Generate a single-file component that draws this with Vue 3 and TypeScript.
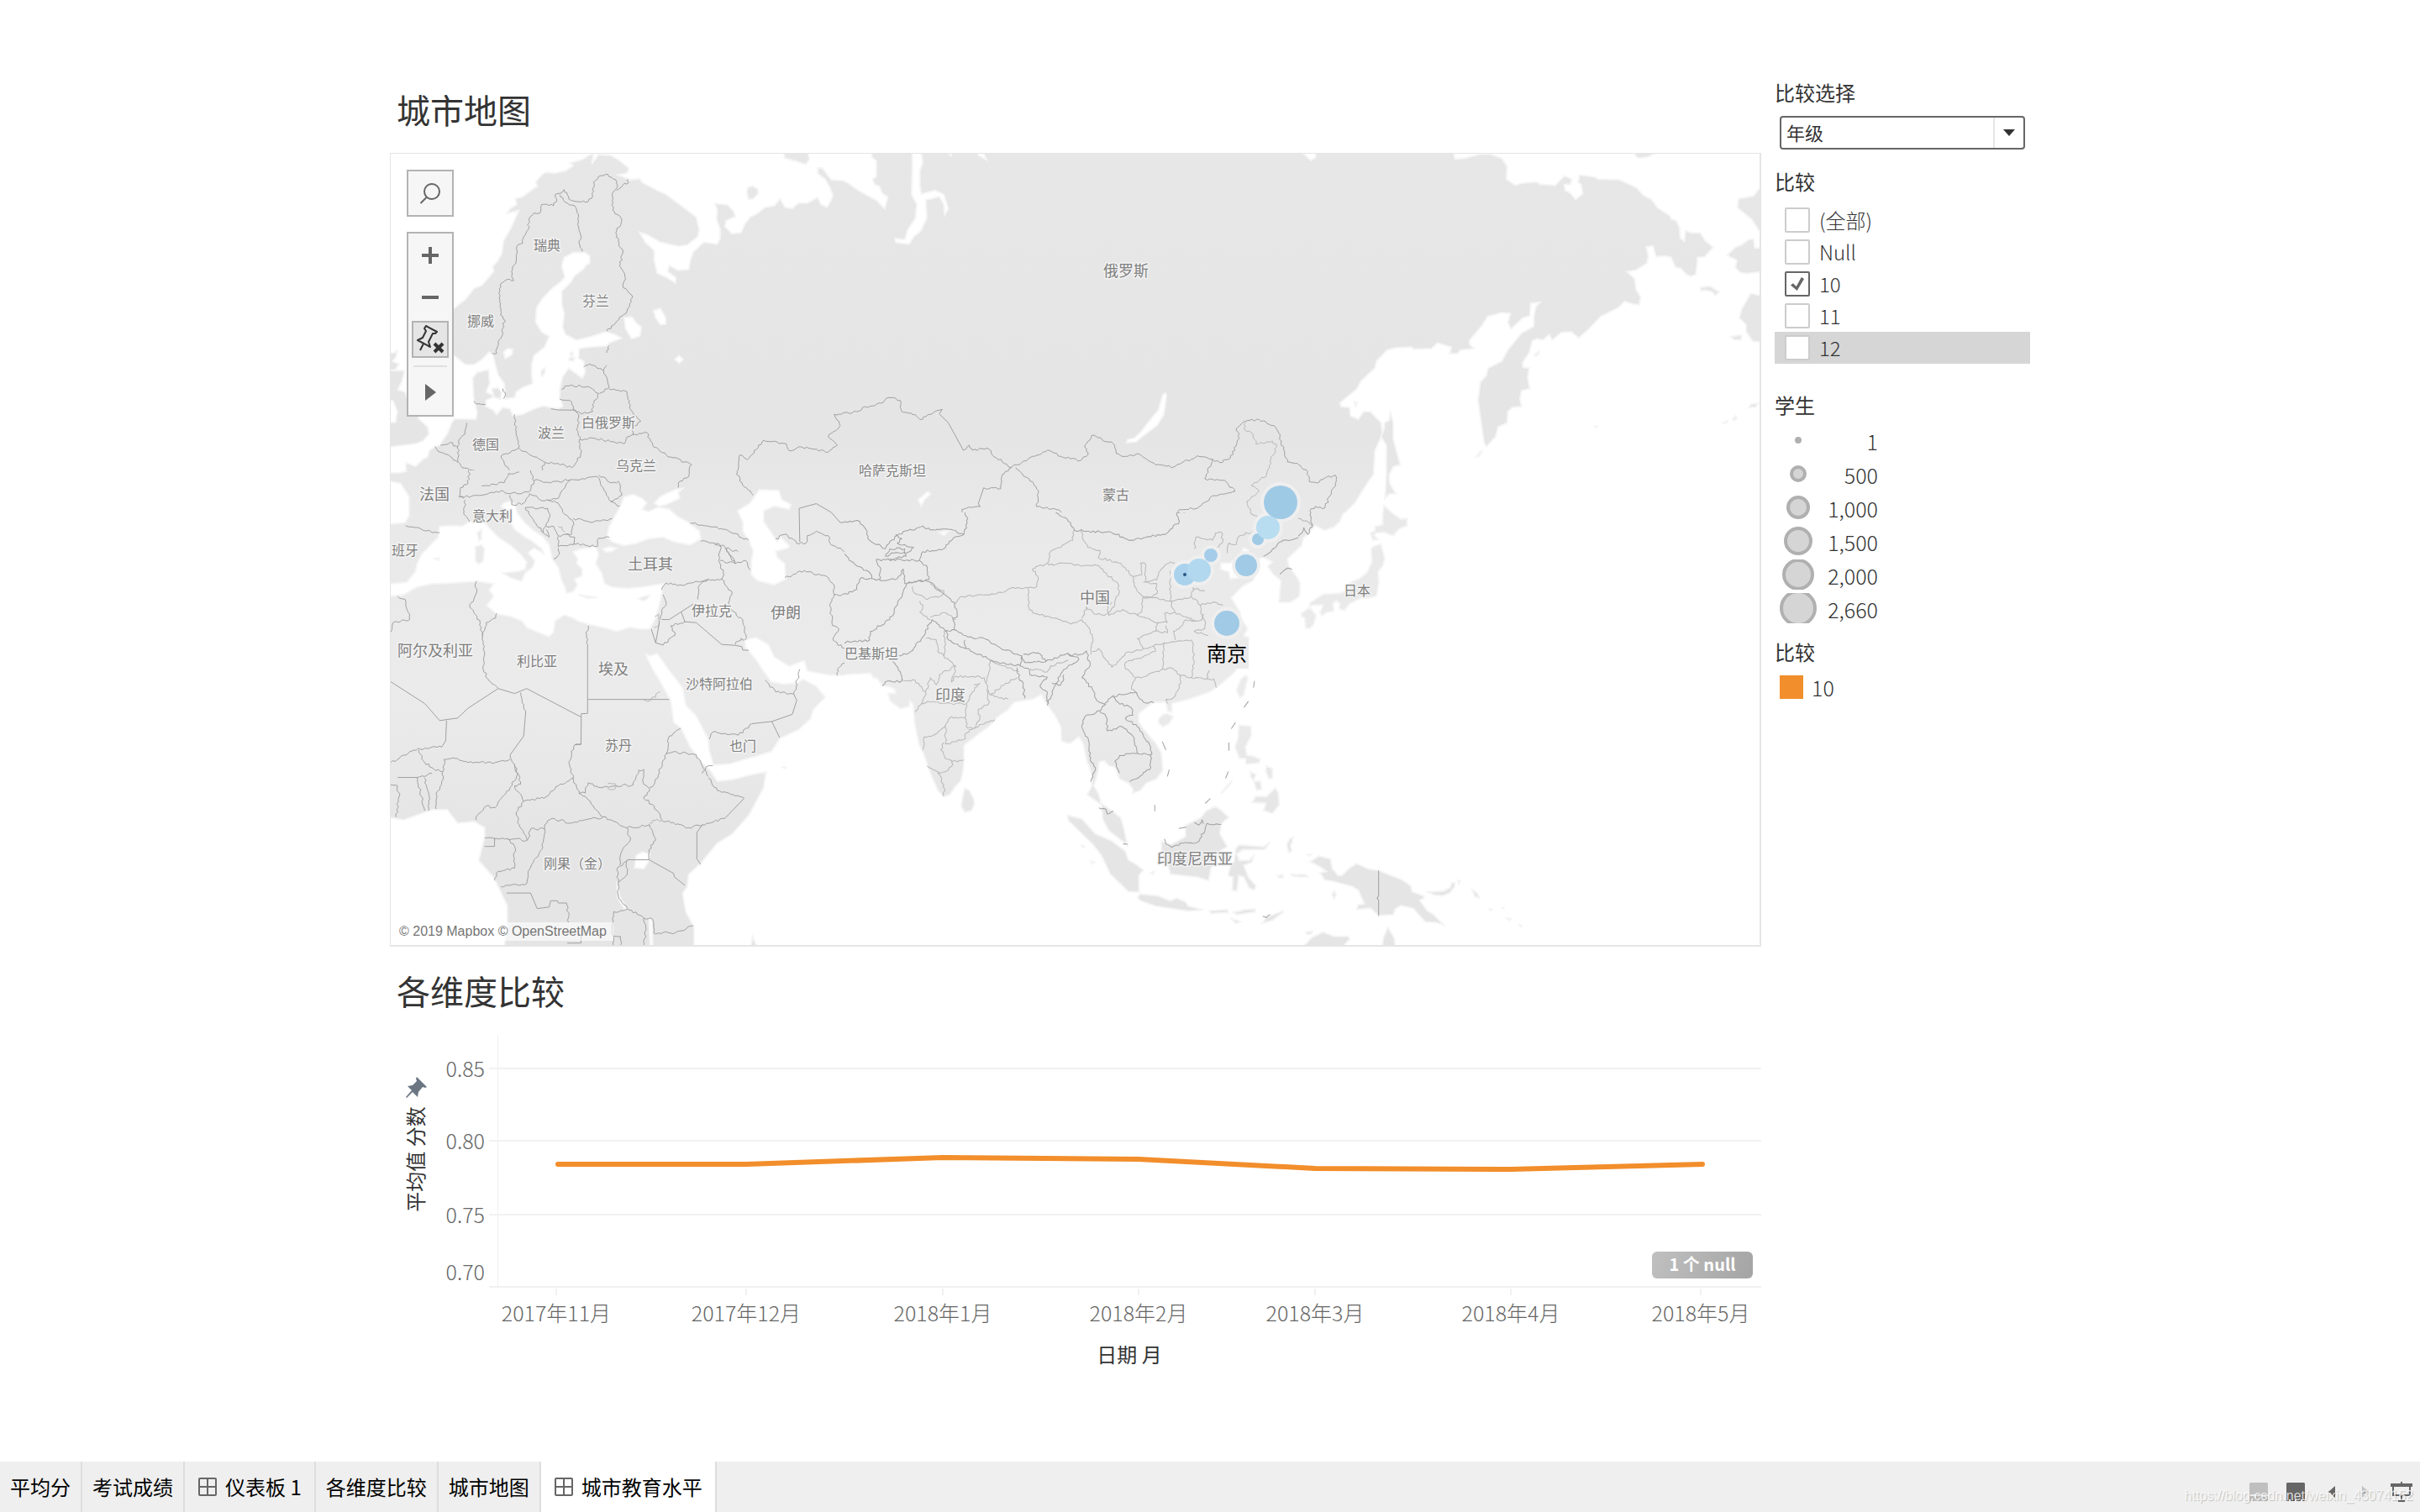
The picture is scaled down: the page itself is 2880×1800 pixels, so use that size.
<script setup lang="ts">
import { ref } from 'vue'

interface TileSource {
  id: string
  ox: number
  oy: number
  sx: number
  sy: number
  x1: number
  y1: number
  x2: number
  y2: number
  land: string[]
  water: string[]
  isles: string[]
  borders: string[]
  straight: string[]
  regions: string[]
}

type Pt = [number, number]

const ALL = '-40,-40 1640,-40 1640,1640 -40,1640'

const sources: TileSource[] = [
  {
    id: 'nw', ox: 450, oy: 80, sx: 2.8, sy: 3, x1: 450, y1: 180, x2: 1005, y2: 560,
    land: [
      '230,880 290,830 320,790 345,780 385,730 382,712 400,690 412,665 418,620 440,580 455,545 468,512 430,522 440,505 462,490 458,470 482,462 510,440 530,425 525,410 545,385 560,375 590,378 625,370 650,352 640,342 680,330 700,316 718,308 712,345 735,312 775,315 800,330 835,360 830,378 800,385 840,402 872,398 880,412 930,440 960,455 1010,495 1060,535 1070,580 1065,605 1030,635 1000,640 940,625 900,600 872,590 890,625 920,655 920,690 930,735 960,750 990,770 992,752 965,730 970,708 1000,725 1035,722 1040,690 1050,660 1085,625 1130,632 1140,610 1140,580 1128,545 1130,510 1122,487 1165,492 1185,515 1190,533 1160,548 1155,568 1180,595 1210,590 1222,560 1240,535 1260,525 1290,500 1320,495 1340,470 1355,500 1380,505 1400,485 1430,485 1465,465 1475,490 1495,500 1510,475 1515,455 1505,430 1490,400 1465,380 1465,360 1480,360 1510,402 1620,412 1620,1500 95,1500 92,1412 125,1425 150,1400 165,1392 170,1370 188,1355 205,1350 230,1310 245,1270 255,1255 325,1258 330,1235 325,1210 318,1180 315,1110 330,1090 368,1080 372,1130 360,1160 388,1175 360,1190 358,1210 385,1225 395,1240 415,1215 440,1220 450,1245 480,1240 520,1220 550,1210 575,1215 600,1220 615,1210 605,1180 605,1150 615,1105 635,1075 655,1090 680,1110 690,1090 685,1050 668,1040 670,1005 700,1000 760,995 770,985 810,968 790,955 760,945 700,965 660,975 625,955 615,930 620,880 612,845 612,800 640,770 655,745 685,720 695,705 705,700 705,675 690,662 650,662 620,680 612,710 622,750 610,765 580,790 545,830 528,860 525,910 545,945 570,962 555,1000 520,1030 512,1060 512,1100 515,1130 480,1145 460,1160 455,1180 425,1185 420,1130 400,1100 390,1060 382,1025 370,1018 345,1045 320,1062 290,1062 265,1040 230,1015',
      '0,1082 88,1084 80,1120 66,1152 90,1160 100,1190 115,1210 140,1220 135,1255 165,1285 170,1310 150,1335 125,1345 0,1362',
      '0,1020 50,1020 64,1012 60,1036 48,1050 70,1060 56,1082 0,1082',
    ],
    water: [
      '0,1180 50,1192 64,1230 58,1268 0,1272',
      '820,895 845,892 862,915 877,928 872,960 845,970 825,935',
      '918,870 940,862 958,895 958,918 940,918 925,895',
      '418,1018 432,1005 448,1008 446,1026 424,1040',
      '990,1044 1002,1030 1016,1044 1003,1057',
    ],
    isles: [
      '1228,445 1232,430 1248,424 1266,436 1266,452 1250,470 1234,472',
      '1350,290 1430,290 1437,330 1425,347 1390,335 1355,325',
      '542,1098 545,1082 556,1075 556,1088 548,1104',
      '378,1150 398,1144 412,1160 408,1185 388,1180',
      '634,1046 640,1036 655,1038 650,1050',
      '640,1020 648,1018 650,1030 642,1030',
    ],
    borders: [
      '380,1022 395,1022 400,980 412,960 415,915 424,905 408,885 406,800 412,770 430,758 452,762 445,730 460,690 462,640 482,628 485,605 500,580 502,545 520,520 540,520 545,490 585,495 595,470 590,455 610,450 620,437 635,470 660,480 700,480 715,460 718,410 735,390 765,382 795,410 795,430 780,460 782,510 812,545 792,592 815,665 805,710 825,755 815,780 848,822 830,870 762,943',
      '795,440 820,415 835,412 832,400',
      '605,455 630,485 655,495 667,525 668,570 675,600 670,630 680,658',
      '770,995 768,1008 762,1020',
      '685,1070 705,1060 725,1068 750,1085 762,1065',
      '752,1085 762,1110 770,1145 738,1165',
      '612,1150 630,1138 700,1140 735,1165 715,1205 715,1230 680,1238 655,1225',
      '770,1150 830,1160 835,1200 850,1235 875,1265 850,1290 850,1312',
      '605,1185 645,1195 650,1222 668,1240 665,1300 672,1330 720,1325 820,1345 830,1320 895,1305 915,1350 960,1385 1045,1420 1030,1450',
      '455,1240 460,1300 468,1360 410,1388 425,1425 455,1450',
      '468,1360 500,1380 555,1410 600,1415 645,1430 675,1385 672,1330',
      '555,1412 540,1450',
      '295,1270 290,1310 270,1330 265,1400 280,1430 320,1440',
      '190,1355 200,1372 240,1390 265,1412',
      '208,1350 240,1340 265,1358',
      '320,1192 328,1203 358,1205',
      '416,1148 425,1168 418,1184',
      '1195,1450 1205,1385 1230,1402 1285,1332 1360,1345 1370,1370 1405,1355 1500,1375 1530,1350 1500,1320 1540,1280 1520,1240 1575,1232',
    ],
    straight: ['576,1220 600,1224 655,1225'],
    regions: [],
  },
  {
    id: 'sw', ox: 450, oy: 560, sx: 2.8, sy: 2.703, x1: 450, y1: 560, x2: 1005, y2: 1126,
    land: [ALL],
    water: [
      '0,-30 95,-30 96,2 70,8 0,6',
      '0,35 42,35 75,42 103,85 103,145 90,168 42,172 0,172',
      '0,366 42,365 95,360 125,325 130,300 145,270 170,245 200,215 205,180 245,178 280,180 305,165 345,165 358,172 380,195 400,215 440,240 475,270 495,295 490,318 465,325 415,330 440,345 478,357 490,330 515,312 522,290 500,265 520,250 552,268 545,252 510,225 490,215 455,190 440,165 430,130 410,115 420,105 435,100 455,110 465,140 490,170 520,195 550,215 570,240 580,285 600,312 612,355 622,375 628,395 650,390 664,370 655,350 680,338 680,318 662,300 665,285 650,262 668,255 700,250 725,245 735,270 725,300 745,330 755,365 780,375 830,380 880,375 950,365 945,400 935,440 925,475 905,510 870,510 840,505 795,518 760,508 700,495 665,485 650,475 620,465 590,485 585,520 570,535 530,520 495,505 480,485 440,470 395,462 362,435 385,405 370,385 385,365 330,357 250,362 180,365 130,375 85,400 42,405 0,405',
      '820,85 850,78 880,90 895,105 880,125 900,133 935,118 970,125 1000,150 1030,165 1070,195 1075,220 1040,240 985,230 950,215 900,220 860,235 820,242 780,230 762,215 770,180 785,155 805,120',
      '920,105 940,85 960,75 990,62 1015,58 1000,72 1005,90 960,110 935,115',
      '750,252 770,246 794,250 780,260 758,262',
      '1198,130 1240,105 1270,62 1335,65 1345,95 1375,110 1370,125 1320,115 1285,130 1285,165 1320,215 1330,230 1340,215 1370,242 1365,250 1325,260 1330,280 1355,300 1358,350 1320,368 1265,355 1243,335 1245,285 1250,260 1235,225 1215,195 1215,165',
      '893,592 905,597 930,590 975,650 1015,700 1025,755 1060,790 1100,865 1103,900 1117,948 1170,945 1240,925 1310,905 1340,862 1400,835 1440,800 1450,770 1490,730 1460,695 1415,672 1398,684 1350,688 1310,680 1280,640 1260,610 1225,570 1222,545 1260,538 1300,560 1320,600 1370,630 1420,612 1430,645 1500,658 1640,662 1640,1640 1053,1640 1053,1470 1025,1420 1015,1360 1030,1340 1035,1300 1075,1265 1130,1200 1180,1170 1235,1110 1285,1020 1293,970 1240,980 1180,995 1130,1000 1110,970 1080,940 1040,890 1010,830 985,810 975,740 940,680 915,640 900,610',
      '0,1110 85,1125 180,1092 230,1092 265,1135 320,1130 355,1150 355,1180 335,1255 385,1310 410,1360 430,1400 430,1470 415,1560 0,1560',
      '860,1240 880,1228 905,1235 900,1260 885,1282 855,1278',
      '796,1322 804,1370 828,1410 822,1412 798,1375',
      '903,1445 912,1448 916,1560 908,1560',
    ],
    isles: [
      '324,245 345,240 354,252 350,292 335,302 324,290',
      '330,200 344,190 344,222 336,228',
      '668,400 700,404 730,408 700,412',
      '868,412 890,404 906,402 896,414 880,420',
      '188,284 204,282 200,290',
      '1236,1560 1248,1500 1275,1560',
      '1348,955 1362,955 1354,959',
    ],
    borders: [
      '305,-10 300,42 275,55 270,85 285,90',
      '270,85 345,80 410,65 440,75 500,70 520,35 505,-10',
      '345,50 420,40 435,10 470,5',
      '290,95 285,140 305,165',
      '440,80 445,110 485,105 505,75 555,98 600,90 640,30 575,40 520,32',
      '640,30 655,30 730,20 775,100 805,115',
      '735,15 780,40 800,35 812,80 775,100',
      '490,120 565,122 572,150 550,200 520,165 490,120',
      '565,95 600,105 620,140 650,165 645,205 600,210 585,180 560,180',
      '650,155 720,165 780,155',
      '600,212 600,245 650,240 655,215 625,205',
      '650,235 730,245 735,218 770,215',
      '600,250 605,268 585,285',
      '550,200 570,215 560,190',
      '1000,55 1005,35 1035,20 1040,-10',
      '1190,-10 1205,35 1250,80',
      '92,178 160,195 205,200',
      '945,385 960,362 1020,370 1100,350 1145,350 1150,330 1135,290 1140,240 1120,235 1075,228',
      '1040,170 1160,190 1235,225',
      '1122,240 1150,240 1190,300 1225,290 1240,320',
      '1140,290 1190,300 1160,250 1200,262',
      '1065,415 1070,370 1100,350',
      '1145,350 1180,395 1165,440 1215,480 1225,545',
      '950,400 960,425 945,450 940,480',
      '950,562 990,530 975,500 1022,487',
      '1190,560 1210,540 1222,545',
      '1355,345 1420,322 1500,345 1520,370 1520,400 1580,400',
      '1520,400 1505,435 1515,500 1535,510 1515,545 1560,580 1555,620 1530,640 1530,660',
      '1325,220 1360,205 1395,235 1425,235 1430,210 1460,195 1500,210 1510,240 1540,250 1580,290',
      '1290,675 1325,713 1385,720 1405,640',
      '1245,815 1200,852 1115,842 1103,865',
      '65,405 90,415 105,480 50,490 42,520',
      '328,357 325,400 305,440 340,490 348,535 360,490 392,475 395,460',
      '348,535 355,590 350,640 365,670 400,700',
      '700,500 695,530 698,560',
      '675,880 655,883 635,940 650,990',
      '475,715 480,740 492,775',
      '440,915 465,975 475,1010',
      '212,890 140,897 120,900 42,940',
      '135,900 155,940 185,960',
      '42,1012 65,1015 70,1050 60,1115',
      '130,988 145,1050 155,1095',
      '130,988 180,975',
      '155,990 170,1050 168,1095',
      '185,960 215,970 212,1010 193,1040 193,1090',
      '215,970 220,930 250,925 300,940 390,940 440,930',
      '455,945 465,975 440,1020 390,1085 360,1080 330,1110 328,1125',
      '475,1010 455,1015 485,1065 460,1100 470,1140 497,1190',
      '485,1065 560,1050 600,1015 650,990 670,1040 700,1060 750,1115 640,1135 580,1120 555,1140 555,1155 510,1152 497,1190 430,1185 355,1182',
      '670,1040 690,1038 700,1005 735,1020 850,1012 868,965 885,962 885,1010 905,1025 885,1055 920,1080 945,1125 1035,1150 1080,1140 1155,1120',
      '1220,1055 1130,1030 1100,990',
      '1100,985 1060,915 985,905 960,912 920,1010 905,1020',
      '960,912 970,855 1008,830',
      '1080,975 1092,955 1115,950',
      '750,1115 830,1150 905,1140 925,1190 903,1220 903,1253',
      '830,1150 840,1190 810,1230 805,1270',
      '555,1155 545,1220 500,1290 495,1330 410,1340',
      '430,1185 455,1210 455,1280 400,1290 388,1320',
      '635,1455 630,1400 628,1392',
      '795,1285 830,1255 830,1300 800,1325 795,1285',
      '800,1325 800,1370 830,1410 885,1440 892,1470 885,1530',
      '885,1440 915,1445 918,1488 990,1488 1050,1465',
      '830,1412 785,1420 780,1480 785,1530',
      '785,1500 808,1500 806,1530',
    ],
    straight: [
      '42,680 155,750 205,805 265,797 300,765 400,702 455,718 495,702 675,793',
      '698,560 698,782 677,783 676,882 655,883',
      '700,737 970,737',
      '492,775 485,855 440,915',
      '228,805 225,870 212,890',
      '65,988 130,988',
      '945,480 970,480 1050,430',
      '1010,455 1022,487',
      '910,510 925,555 950,562',
      '925,555 938,485',
      '1022,487 1060,490 1145,560 1190,563 1212,567 1215,578 1235,579',
      '1405,230 1403,122 1460,107 1510,135 1540,168 1580,165',
      '1385,720 1395,740 1380,785 1312,808 1245,815',
      '1312,808 1338,860',
      '1155,1120 1220,1055',
      '830,1253 903,1253 985,1297 987,1308 1022,1335',
      '1075,1268 1062,1250 1062,1165 1080,1142',
      '428,1360 508,1360 530,1410 570,1405 575,1385 598,1385 600,1392 628,1392',
      '355,1210 388,1210 388,1182',
      '630,1521 676,1521 676,1490',
    ],
    regions: ['885,740 905,742 940,712', '765,1008 790,1008 790,1024 765,1024', '905,1135 930,1122 945,1128', '600,180 612,182 622,198', '922,470 935,462 935,500 920,505'],
  },
  {
    id: 'n', ox: 1000, oy: 160, sx: 2.8, sy: 3, x1: 1005, y1: 180, x2: 1545, y2: 610,
    land: [ALL],
    water: [
      '-40,30 105,30 105,80 120,95 120,150 108,160 115,180 130,185 140,210 158,225 148,265 120,235 60,200 20,170 -40,165',
      '240,30 262,30 272,80 275,100 265,130 265,180 270,213 315,200 345,215 360,265 348,287 345,250 330,222 285,235 288,300 268,345 245,365 230,392 185,386 183,372 215,376 225,340 250,300 255,250 238,215 240,130',
      '1075,930 1082,924 1087,932 1078,1000 1055,1040 1005,1080 985,1098 955,1100 958,1090 980,1085 1000,1065 1040,1010 1060,985',
      '1540,30 1640,30 1640,120 1568,92 1545,68',
      '260,1305 292,1276 300,1284 280,1305 270,1327',
      '460,40 478,68 487,90 460,75',
      '355,60 372,60 368,76',
    ],
    isles: [],
    borders: [
      '0,1000 70,985 75,975 135,960 160,940 200,950 205,990 235,995 265,1018 300,1000 330,985',
      '410,1128 430,1110 440,1128 490,1120 520,1155 555,1178 570,1190 590,1180 640,1150 690,1128 735,1150 800,1165 825,1145 815,1110 838,1075 910,1105 920,1140 950,1150 990,1140 1050,1180 1110,1188 1190,1148 1240,1160 1265,1172 1300,1155 1330,1085 1320,1050 1350,1025 1395,1018 1445,1040 1465,1080 1490,1170 1530,1180 1560,1210 1568,1245',
      '1240,1160 1215,1230 1280,1235 1315,1275 1245,1290 1190,1335 1130,1340 1122,1385',
      '570,1190 540,1215 535,1265 478,1262',
      '460,1328 405,1340 412,1380',
      '585,1190 610,1220 640,1240 660,1280 655,1330 720,1340 760,1365',
    ],
    straight: ['330,985 340,982 330,998 360,1030 410,1128', '478,1262 460,1318 466,1330 460,1328'],
    regions: ['1350,1030 1345,1050 1375,1070 1385,1105 1440,1095 1455,1115 1435,1160 1420,1220 1370,1255 1395,1275 1355,1310 1370,1360'],
  },
  {
    id: 'ne', ox: 1540, oy: 160, sx: 2.751, sy: 3, x1: 1545, y1: 180, x2: 2096, y2: 610,
    land: [
      '-20,30 20,30 30,68 55,93 70,82 74,30 515,30 527,88 560,85 605,72 640,70 680,85 698,115 695,160 725,182 750,173 795,170 805,178 855,182 885,148 910,160 905,178 885,180 888,200 905,210 922,232 945,212 940,180 930,170 935,145 985,152 995,160 1065,162 1120,190 1145,218 1170,232 1190,262 1230,290 1235,302 1250,308 1262,330 1264,370 1278,382 1282,343 1300,352 1330,352 1345,378 1372,403 1345,437 1320,440 1320,465 1315,500 1300,507 1285,500 1265,478 1248,474 1235,440 1215,434 1185,437 1175,398 1153,402 1160,435 1155,460 1120,485 1090,490 1115,515 1120,555 1135,580 1130,608 1108,606 1083,597 1060,620 1005,650 965,695 932,727 908,705 875,707 845,735 835,715 815,735 795,730 780,738 770,780 748,815 750,832 770,835 765,870 772,908 745,915 740,945 745,972 715,975 700,990 698,1030 668,1045 660,1080 630,1115 622,1100 602,950 610,885 630,860 635,835 680,810 700,770 745,710 785,685 785,650 792,615 805,600 775,603 772,648 750,655 710,695 700,672 708,640 680,637 635,650 610,690 575,735 575,750 590,765 545,770 535,783 510,783 515,760 470,745 450,765 390,767 385,760 335,762 305,770 270,810 265,835 220,880 205,910 150,960 155,972 182,975 185,1005 210,1017 228,990 250,990 285,1030 290,1070 265,1130 260,1215 240,1245 200,1315 160,1360 150,1385 120,1410 100,1413 70,1400 30,1440 -20,1440',
    ],
    water: [],
    isles: [
      '315,988 325,1030 325,1090 348,1180 325,1187 312,1215 313,1245 333,1283 312,1285 298,1300 302,1215 302,1110 285,1080 295,1050 296,1030 312,1020',
      '1600,190 1521,196 1505,220 1455,230 1452,262 1500,305 1521,342 1600,350',
      '1600,405 1508,405 1505,375 1490,375 1465,395 1445,403 1418,432 1450,450 1445,475 1460,493 1480,497 1521,492 1600,492',
      '1600,572 1521,574 1495,568 1465,625 1458,655 1480,680 1480,705 1503,740 1600,742',
      '1330,547 1362,542 1392,563 1380,575 1368,562 1350,557 1332,557',
      '1430,722 1465,716 1463,735 1440,733',
      '1118,60 1195,60 1160,80 1130,85 1118,78',
      '597,1152 608,1134 615,1132 608,1148',
      '788,786 802,774 802,784 790,792',
      '198,955 208,958 202,970',
      '1489,976 1495,964 1520,960 1512,974', '1437,1016 1446,1005 1450,1016 1440,1022', '1402,1032 1418,1024 1416,1030',
      '985,1043 992,1043 988,1047',
      '295,1325 320,1350 320,1360 290,1360',
    ],
    borders: ['-5,1170 20,1182 45,1205 50,1240 75,1245 100,1228 135,1217 138,1240 118,1290 100,1335 70,1328 52,1345 56,1365'],
    straight: [],
    regions: [],
  },
  {
    id: 's', ox: 1000, oy: 600, sx: 2.8, sy: 2.904, x1: 1005, y1: 610, x2: 1545, y2: 1126,
    land: [
      '-30,-30 1640,-30 1640,60 1568,92 1535,120 1530,150 1490,190 1495,215 1520,250 1532,275 1530,320 1500,340 1462,340 1468,265 1440,240 1425,215 1440,200 1410,185 1390,190 1370,200 1360,240 1330,200 1360,160 1345,152 1335,170 1300,205 1268,205 1268,225 1295,235 1300,258 1330,255 1365,242 1385,245 1375,265 1340,285 1303,325 1330,370 1335,395 1358,430 1345,455 1362,462 1345,520 1330,560 1310,585 1260,630 1230,650 1160,675 1105,690 1105,720 1090,715 1085,685 1040,687 995,725 995,755 1020,790 1050,825 1070,860 1075,920 1055,950 1020,965 1000,990 975,1000 975,985 960,965 930,950 915,910 895,905 880,888 862,892 860,920 845,975 860,1000 870,1035 905,1060 935,1085 945,1120 957,1180 945,1170 895,1130 875,1090 870,1040 823,1005 838,975 840,940 822,890 810,830 795,805 765,828 737,820 735,770 715,730 690,695 670,660 640,675 580,685 555,715 535,728 515,745 500,765 455,800 412,835 412,895 408,930 400,960 385,975 365,1005 345,1012 325,990 300,930 280,870 262,830 248,760 242,690 232,680 230,700 200,708 165,680 160,655 185,655 180,640 165,632 140,628 125,605 110,600 100,585 -30,592',
    ],
    water: ['330,98 362,92 345,108'],
    isles: [
      '1540,375 1640,350 1640,430 1552,430 1550,395',
      '1335,605 1350,592 1358,600 1345,660 1332,670 1320,645',
      '1060,745 1075,728 1090,725 1110,735 1095,760 1075,770 1062,760',
      '415,982 430,990 445,1020 447,1040 437,1060 415,1066 403,1045 408,1010',
      '1328,765 1368,768 1370,800 1350,840 1355,868 1375,872 1400,882 1395,895 1352,900 1350,880 1330,880 1315,840 1325,810',
      '1366,925 1385,935 1378,955 1368,945',
      '1420,905 1440,915 1440,948 1428,950 1418,925',
      '1378,960 1400,958 1404,985 1388,990',
      '1450,982 1460,1000 1463,1040 1440,1070 1410,1060 1418,1035 1372,1032 1385,1010 1420,1012',
      '1268,1000 1290,972 1306,955 1300,968 1275,996',
      '757,1076 805,1088 850,1140 905,1165 950,1200 960,1230 985,1245 1010,1265 995,1285 996,1342 960,1340 900,1280 870,1215 840,1175 790,1125 760,1095',
      '1000,1348 1060,1355 1100,1372 1120,1362 1150,1375 1160,1390 1210,1403 1160,1408 1050,1390 1000,1372 990,1360',
      '1230,1406 1290,1402 1292,1412 1235,1416',
      '1310,1412 1350,1402 1382,1400 1384,1410 1322,1420',
      '1405,1450 1420,1430 1475,1406 1475,1412 1440,1440',
      '1300,1432 1318,1438 1334,1444 1318,1450',
      '1070,1165 1100,1178 1150,1150 1150,1110 1200,1085 1220,1060 1250,1045 1265,1055 1295,1083 1270,1105 1265,1140 1290,1185 1265,1200 1250,1240 1235,1260 1228,1302 1190,1290 1100,1280 1090,1240 1070,1200',
      '1318,1190 1330,1178 1410,1185 1432,1170 1415,1194 1340,1196 1322,1210 1330,1232 1362,1232 1378,1215 1372,1238 1345,1250 1360,1290 1385,1320 1380,1335 1362,1328 1345,1290 1328,1285 1322,1338 1306,1335 1308,1290 1292,1285 1300,1250 1312,1235',
      '1488,1180 1495,1160 1508,1152 1506,1170 1500,1180 1505,1200 1494,1205',
      '1458,1284 1475,1282 1476,1292 1462,1292', '1502,1280 1550,1282 1560,1288 1510,1288', '1034,1275 1046,1270 1042,1281', '835,1235 846,1238 838,1244', '804,1180 814,1184 808,1188',
      '1548,1540 1550,1520 1570,1480 1640,1470 1640,1540',
    ],
    borders: [
      '0,66 65,60 90,95 92,120 150,155 165,130 210,95 240,90 275,76 300,90 370,88 412,105 425,50 405,15 465,0',
      '185,105 205,120 190,135 245,150 220,170 185,168 150,180 165,155 215,155 220,180 165,190',
      '0,155 30,195 100,240 105,258 65,258 55,295 0,318',
      '105,258 135,265 190,258 210,225 215,275 295,262 290,220 262,195 120,192 135,225 130,262',
      '262,195 275,165 345,155 375,120 412,105',
      '0,480 98,470 100,440 165,400 190,350 215,290 222,275 260,265 300,270 330,300 380,340 390,390 375,395 382,435',
      '140,628 150,615 205,612 200,580 175,545',
      '195,525 235,510 275,460 305,400 350,440 382,435 425,460 480,465 550,505 605,525 600,560 520,545 420,500 415,470',
      '420,500 360,470 352,435',
      '610,520 660,515 685,545 615,548 605,525',
      '685,545 750,520 800,520 820,508 832,560 805,600 840,640 855,680 880,692 905,665 985,650 1010,685 1045,687',
      '590,565 595,600 610,620 613,672',
      '600,560 625,568 632,590 690,598 665,630 690,650 690,695 710,640 740,580 795,535 760,520',
      '705,620 735,625 745,590',
      '885,692 865,715 815,735 805,765 830,830 830,870 850,920 835,960',
      '910,660 925,685 970,705 975,730 950,740 990,770 1035,840 1035,910 1000,940 965,960',
      '865,715 885,735 890,785 940,770 980,810 990,862 930,870 915,890 930,930',
      '990,862 1035,865',
      '650,-5 660,12 720,30 760,60 780,90 905,100 970,125 1090,100 1130,60 1122,30 1160,25 1220,0',
      '1410,182 1470,130 1530,115 1545,88',
      '1465,243 1485,225 1505,225',
      '862,1050 885,1055 890,1072 910,1062',
      '1080,1158 1085,1175 1105,1187 1150,1170 1190,1170 1215,1130 1222,1104 1270,1107',
      '1180,1100 1195,1110 1205,1092 1210,1105', '942,1176 958,1177', '1408,1425 1420,1430 1432,1420',
    ],
    straight: [
      '1380,612 1377,635', '1360,682 1345,703', '1317,755 1303,777', '1295,825 1295,853', '1293,925 1284,948', '1233,1018 1216,1035', '1153,1117 1128,1122', '1048,1040 1048,1062', '1096,918 1090,942', '1073,822 1085,850',
    ],
    regions: [
      '780,90 775,125 700,165 690,205 640,225 660,255 655,285 625,290 575,288 545,305 480,315 400,320 380,345',
      '690,205 710,212 745,205 780,212 855,212 925,275 930,300 915,345 905,360 880,385 845,380 820,355 805,395',
      '625,290 630,365 650,378 720,395 770,415 805,400 830,430 840,460 835,520',
      '800,92 825,150 865,160 860,185 935,205 975,250 1005,245 1000,205 1015,205 1020,270 1055,262 1070,225 1100,200 1115,205',
      '975,250 985,290 1010,320 1005,370 990,385 940,365 895,385 890,350 905,340',
      '1010,270 1055,275 1055,310 1040,320 1010,325',
      '840,510 860,500 905,565 920,555 935,535 950,515 1010,500 990,465 1050,440 1060,410 1020,395 990,385',
      '1010,320 1070,330 1100,335 1115,375 1080,378 1090,410 1060,410',
      '1100,230 1100,310 1100,335 1170,320 1175,290 1215,300',
      '1115,375 1190,405 1205,400 1200,350 1170,320',
      '1190,405 1150,400 1130,430 1110,440 1115,470',
      '1200,350 1240,340 1275,350', '1210,380 1215,430 1180,440 1225,455',
      '1010,500 1045,490 1050,510 1030,520 950,548 950,570 985,600 970,640 990,655',
      '985,600 1020,595 1075,570 1080,480 1170,470 1180,520 1170,600 1130,590 1110,570 1075,570',
      '1045,490 1080,480', '1050,440 1090,445 1085,420',
      '1130,590 1135,620 1110,670 1085,675 1090,690',
      '1170,600 1220,605 1245,605 1253,635', '1220,605 1230,575',
      '1180,155 1185,115 1240,125 1250,100 1270,98 1275,130 1255,150', '1290,170 1295,135 1320,140 1330,110 1375,95', '1365,0 1370,35 1390,42', '1510,15 1530,25 1560,20',
      '205,608 250,610 285,650 275,680 260,700 250,720',
      '285,650 300,600 320,625 330,590 385,560 370,615 385,595 480,600 490,640 500,660 560,675',
      '270,690 300,685 370,690 420,690 415,740 370,735 350,765 310,800 280,805 275,850',
      '350,765 350,830 410,815 430,780 480,760 515,745',
      '345,825 335,850 350,880 375,890 412,885', '290,905 330,930 360,920 375,900 370,890',
      '325,930 345,970 345,1010',
      '420,690 440,650 465,620 445,625', '415,740 425,775 450,775 465,740 460,710 495,690 490,640',
      '285,465 320,470 325,510 345,525 350,480 345,440', '345,525 385,560', '485,620 495,580 500,540 550,560 595,580',
      '500,660 550,620 590,600', '632,570 690,580 700,560 760,540',
      '240,285 250,310 290,330 340,315 345,300 300,275', '265,335 275,350 265,375 300,400', '300,390 345,375 385,400',
    ],
  },
  {
    id: 'se', ox: 1540, oy: 600, sx: 2.751, sy: 2.904, x1: 1545, y1: 610, x2: 2096, y2: 1126,
    land: ['-30,-30 220,-30 195,0 160,35 150,60 130,80 100,92 70,75 30,120 25,145 -30,185'],
    water: [],
    isles: [
      '290,0 300,8 320,30 350,52 370,50 370,75 345,85 325,110 295,98 268,100 262,108 275,122 258,125 250,100 265,92 265,78 290,72',
      '262,145 285,138 290,160 297,190 290,215 275,235 278,270 270,318 245,325 220,325 182,345 165,368 148,362 150,345 138,335 128,345 130,370 105,375 92,387 85,375 95,350 60,350 50,355 52,342 95,312 150,308 180,300 185,270 215,258 240,235 255,200 252,155',
      '24,378 52,357 72,385 65,415 52,430 38,428 35,395 25,388',
      '-30,180 2,225 20,275 18,318 -30,335',
      '52,1238 80,1217 120,1227 125,1260 145,1285 158,1283 180,1260 205,1243 245,1262 277,1267 355,1300 382,1320 387,1340 425,1355 425,1362 412,1370 435,1405 458,1420 490,1455 465,1447 430,1445 390,1398 350,1388 332,1400 325,1420 277,1423 250,1398 205,1402 210,1385 230,1382 210,1335 190,1322 130,1305 100,1300 85,1275 105,1270 90,1258 65,1243',
      '440,1342 490,1338 512,1325 515,1310 527,1310 525,1325 510,1345 485,1355 460,1352',
      '583,1332 600,1345 607,1362 592,1358', '124,1350 132,1338 138,1352 130,1365', '640,1400 648,1402 644,1406', '680,1396 690,1400', '697,1432 711,1434 705,1440', '536,1302 545,1304 540,1314', '738,1452 745,1460 740,1460',
      '-30,1276 40,1282 46,1290 -30,1287',
      '20,1560 35,1524 60,1497 95,1480 130,1494 178,1495 182,1505 160,1530 150,1560',
      '38,1480 60,1476 58,1486 42,1488',
      '285,1560 292,1500 307,1463 328,1500 335,1560',
      '45,1212 55,1212 50,1217',
    ],
    borders: ['105,-10 100,15 70,8 52,22 60,70 45,105 32,82 20,105 -10,118'],
    straight: ['277,1267 277,1355 272,1363 277,1370 277,1424'],
    regions: ['-5,65 20,50 40,58 60,75'],
  },
]

/** Repeatable noise in -1..1 so outlines keep the same shape on each render. */
function noise(a: number, b: number): number {
  const v = Math.sin(a * 12.9898 + b * 78.233) * 43758.5453
  return (v - Math.floor(v)) * 2 - 1
}

function parse(text: string): Pt[] {
  return text.split(' ').map((p) => p.split(',').map(Number) as Pt)
}

function trace(text: string, amp: number, step: number, closed: boolean): string {
  const pts = parse(text)
  if (closed) pts.push(pts[0])
  const out: string[] = [`M${pts[0][0]} ${pts[0][1]}`]
  for (let i = 1; i < pts.length; i++) {
    const [ax, ay] = pts[i - 1]
    const [bx, by] = pts[i]
    const len = Math.hypot(bx - ax, by - ay)
    const n = amp > 0 ? Math.max(1, Math.round(len / step)) : 1
    for (let k = 1; k <= n; k++) {
      const t = k / n
      const off = k < n ? noise(ax + k * 3.1, by + k * 1.7) * amp : 0
      const x = ax + (bx - ax) * t - ((by - ay) / (len || 1)) * off
      const y = ay + (by - ay) * t + ((bx - ax) / (len || 1)) * off
      out.push(`L${x.toFixed(1)} ${y.toFixed(1)}`)
    }
  }
  return out.join('') + (closed ? 'Z' : '')
}

const tiles = sources.map((s) => ({
  id: s.id,
  x: s.x1,
  y: s.y1,
  w: s.x2 - s.x1,
  h: s.y2 - s.y1,
  box: [(s.x1 - s.ox) * s.sx, (s.y1 - s.oy) * s.sy, (s.x2 - s.x1) * s.sx, (s.y2 - s.y1) * s.sy].join(' '),
  g1: (182 - s.oy) * s.sy,
  g2: (1126 - s.oy) * s.sy,
  land: s.land.map((p) => trace(p, 0, 20, true)).join(''),
  water: s.water.map((p) => trace(p, 0, 20, true)).join(''),
  isles: s.isles.map((p) => trace(p, 0, 20, true)).join(''),
  borders: s.borders.map((p) => trace(p, 4, 8, false)).join('') + s.straight.map((p) => trace(p, 0, 9, false)).join(''),
  regions: s.regions.map((p) => trace(p, 4, 8, false)).join(''),
}))

const places: { name: string; x: number; y: number; big?: boolean }[] = [
  { name: '瑞典', x: 651, y: 292 },
  { name: '芬兰', x: 709, y: 358 },
  { name: '挪威', x: 572, y: 382 },
  { name: '德国', x: 578, y: 529 },
  { name: '波兰', x: 656, y: 515 },
  { name: '白俄罗斯', x: 724, y: 503 },
  { name: '乌克兰', x: 757, y: 554 },
  { name: '法国', x: 517, y: 588, big: true },
  { name: '意大利', x: 586, y: 614 },
  { name: '班牙', x: 482, y: 655 },
  { name: '土耳其', x: 774, y: 671, big: true },
  { name: '伊拉克', x: 847, y: 727 },
  { name: '伊朗', x: 935, y: 729, big: true },
  { name: '阿尔及利亚', x: 518, y: 774, big: true },
  { name: '利比亚', x: 639, y: 787 },
  { name: '埃及', x: 730, y: 796, big: true },
  { name: '沙特阿拉伯', x: 856, y: 814 },
  { name: '苏丹', x: 736, y: 887 },
  { name: '也门', x: 884, y: 888 },
  { name: '刚果（金）', x: 687, y: 1028 },
  { name: '巴基斯坦', x: 1037, y: 778 },
  { name: '印度', x: 1131, y: 827, big: true },
  { name: '中国', x: 1303, y: 711, big: true },
  { name: '蒙古', x: 1328, y: 589 },
  { name: '俄罗斯', x: 1340, y: 322, big: true },
  { name: '哈萨克斯坦', x: 1062, y: 560 },
  { name: '日本', x: 1615, y: 703 },
  { name: '印度尼西亚', x: 1422, y: 1022, big: true },
]

const cities = [
  { x: 1497, y: 642, r: 7, c: '#9fcae6' },
  { x: 1524, y: 598, r: 20, c: '#9fcae6' },
  { x: 1509, y: 628, r: 14, c: '#b8ddf0' },
  { x: 1441, y: 661, r: 8, c: '#a5cdea' },
  { x: 1410, y: 684, r: 13, c: '#aad2ec' },
  { x: 1427, y: 679, r: 14, c: '#b2d8ef' },
  { x: 1483, y: 673, r: 13, c: '#a0cae6' },
  { x: 1460, y: 742, r: 15, c: '#a0cae6' },
]

const scale = [
  { label: '0.85', y: 1272, ty: 1273 },
  { label: '0.80', y: 1358, ty: 1359 },
  { label: '0.75', y: 1446, ty: 1447 },
  { label: '0.70', y: 1532, ty: 1515 },
]

const months = [
  { label: '2017年11月', x: 662, v: 1386 },
  { label: '2017年12月', x: 888, v: 1386 },
  { label: '2018年1月', x: 1122, v: 1378 },
  { label: '2018年2月', x: 1355, v: 1380 },
  { label: '2018年3月', x: 1565, v: 1391 },
  { label: '2018年4月', x: 1798, v: 1392 },
  { label: '2018年5月', x: 2024, v: 1386 },
]
const series = months.map((m, i) => `${i === 0 ? 664 : i === 6 ? 2026 : m.x},${m.v}`).join(' ')

const compareBy = ref('年级')
const options = ref([
  { label: '(全部)', on: false },
  { label: 'Null', on: false },
  { label: '10', on: true },
  { label: '11', on: false },
  { label: '12', on: false, hot: true },
])

const sizes = [
  { label: '1', r: 4 },
  { label: '500', r: 10 },
  { label: '1,000', r: 14 },
  { label: '1,500', r: 17 },
  { label: '2,000', r: 19 },
  { label: '2,660', r: 22 },
]

const sheets = [
  { name: '平均分' },
  { name: '考试成绩' },
  { name: '仪表板 1', board: true },
  { name: '各维度比较' },
  { name: '城市地图' },
  { name: '城市教育水平', board: true, active: true },
]
</script>

<template>
  <div class="page">
    <main class="dash">
      <div class="views">
        <section>
          <h2 class="title">城市地图</h2>
          <div class="map">
            <svg class="canvas" viewBox="465 183 1629 942" role="img" aria-label="城市地图">
              <svg
                v-for="t in tiles"
                :key="t.id"
                :x="t.x"
                :y="t.y"
                :width="t.w"
                :height="t.h"
                :viewBox="t.box"
                preserveAspectRatio="none"
              >
                <defs>
                  <linearGradient :id="'land-' + t.id" gradientUnits="userSpaceOnUse" x1="0" x2="0" :y1="t.g1" :y2="t.g2">
                    <stop offset="0" stop-color="#e7e7e7" />
                    <stop offset="0.36" stop-color="#e5e5e5" />
                    <stop offset="0.46" stop-color="#e9e9e9" />
                    <stop offset="0.68" stop-color="#ebebeb" />
                    <stop offset="0.86" stop-color="#e5e5e5" />
                  </linearGradient>
                </defs>
                <path class="shore" :d="t.land" :fill="`url(#land-${t.id})`" />
                <path class="shore sea" :d="t.water" />
                <path class="shore" :d="t.isles" :fill="`url(#land-${t.id})`" />
                <path class="region" :d="t.regions" />
                <path class="border" :d="t.borders" />
              </svg>
              <text v-for="p in places" :key="p.name" class="place" :class="{ big: p.big }" :x="p.x" :y="p.y + (p.big ? 7 : 6)">{{ p.name }}</text>
              <circle v-for="(c, i) in cities" :key="'h' + i" :cx="c.x" :cy="c.y" :r="c.r + 4" fill="#efefef" />
              <circle v-for="(c, i) in cities" :key="'c' + i" :cx="c.x" :cy="c.y" :r="c.r" :fill="c.c" />
              <circle cx="1410" cy="684" r="2" fill="#2a5783" />
              <rect x="1434" y="760" width="52" height="36" fill="#ebebeb" />
              <text class="city" x="1460" y="787">南京</text>
            </svg>
            <div class="tools">
              <button class="tool search" type="button" aria-label="搜索">
                <svg width="26" height="26" viewBox="0 0 26 26" fill="none" stroke="#666" stroke-width="2"><circle cx="15" cy="11" r="9" /><path d="M8.500 18 L1.500 25" /></svg>
              </button>
              <div class="group">
                <button class="step" type="button" aria-label="放大">
                  <svg width="20" height="20" viewBox="0 0 20 20" fill="#666"><path d="M8 0h4v8h8v4h-8v8H8v-8H0V8h8z" /></svg>
                </button>
                <button class="step" type="button" aria-label="缩小">
                  <svg width="20" height="20" viewBox="0 0 20 20" fill="#666"><path d="M0 6h20v4H0z" /></svg>
                </button>
                <button class="pin" type="button" aria-label="重置">
                  <svg width="40" height="40" viewBox="0 0 40 40" fill="none">
                    <path d="M15 4 L28 11 L26 13 L23 13 L18 23 L20 29 L5 21 L11 18 L15 10 L13 7 Z M12 25 L8 33" stroke="#333" stroke-width="2" stroke-linejoin="round" />
                    <path d="M25 25 L35 35 M35 25 L25 35" stroke="#333" stroke-width="4" />
                  </svg>
                </button>
                <span class="rule"></span>
                <button class="more" type="button" aria-label="更多工具">
                  <svg width="13" height="20" viewBox="0 0 13 20" fill="#666"><path d="M0 0 L13 10 L0 20z" /></svg>
                </button>
              </div>
            </div>
            <small class="credit">© 2019 Mapbox © OpenStreetMap</small>
          </div>
        </section>

        <section>
          <h2 class="title lower">各维度比较</h2>
          <div class="chart">
            <svg class="canvas" viewBox="464 1226 1632 410" role="img" aria-label="各维度比较">
              <path d="M592.500 1232V1532" stroke="#f0f0f0" stroke-width="1" />
              <g v-for="s in scale" :key="s.label">
                <path :d="`M582 ${s.y}H2096`" stroke="#f1f1f1" stroke-width="2" />
                <text class="tick" x="577" :y="s.ty + 9" text-anchor="end">{{ s.label }}</text>
              </g>
              <g v-for="m in months" :key="m.label">
                <path :d="`M${m.x} 1534V1542`" stroke="#f1f1f1" stroke-width="2" />
                <text class="tick" :x="m.x" y="1573" text-anchor="middle">{{ m.label }}</text>
              </g>
              <polyline :points="series" fill="none" stroke="#f28e2b" stroke-width="6" stroke-linecap="round" stroke-linejoin="round" />
              <text class="axis" x="1344" y="1622" text-anchor="middle">日期 月</text>
              <text class="axis" transform="translate(504 1380) rotate(-90)" text-anchor="middle">平均值 分数</text>
              <path d="M496 1282 L508 1294 L506 1295 L503 1294 L498 1300 L497 1306 L491 1300 L484 1307 L483 1306 L490 1298 L485 1293 L491 1292 L496 1287 L495 1284z" fill="#6b7682" />
            </svg>
            <button class="nulls" type="button">1 个 null</button>
          </div>
        </section>
      </div>

      <aside class="side">
        <label class="head" for="compare-by">比较选择</label>
        <div class="pick">
          <select id="compare-by" v-model="compareBy">
            <option>年级</option>
            <option>学科</option>
          </select>
        </div>
        <fieldset>
          <legend class="head">比较</legend>
          <label v-for="o in options" :key="o.label" class="opt" :class="{ hot: o.hot }">
            <input v-model="o.on" type="checkbox" />
            <span>{{ o.label }}</span>
          </label>
        </fieldset>
        <h3 class="head students">学生</h3>
        <ul class="sizes">
          <li v-for="s in sizes" :key="s.label">
            <svg width="44" height="36" viewBox="-22 -18 44 36">
              <circle :r="s.r - 2" fill="#d5d5d5" stroke="#b0b0b0" stroke-width="4" />
            </svg>
            <span>{{ s.label }}</span>
          </li>
        </ul>
        <h3 class="head colours">比较</h3>
        <p class="key"><i></i>10</p>
      </aside>
    </main>

    <footer class="bar">
      <nav class="sheets">
        <a v-for="s in sheets" :key="s.name" href="#" :class="{ board: s.board, active: s.active }">
          <svg v-if="s.board" width="22" height="22" viewBox="0 0 22 22" fill="none" stroke="#666" stroke-width="2"><rect x="1" y="1" width="20" height="20" rx="1" /><path d="M11 1V21M1 11H21" /></svg>
          <span>{{ s.name }}</span>
        </a>
      </nav>
      <div class="views-nav">
        <button type="button" aria-label="显示标签">
          <svg width="22" height="22" viewBox="0 0 22 22" fill="#bfbfbf"><path d="M1 0h20l1 1v13H0V1zM0 16h6v2h2v-2h6v2h2v-2h6v5l-1 1h-3v-2h-2v2h-5v-2H9v2H4v-2H2v2H0z" /></svg>
        </button>
        <button type="button" aria-label="显示胶片">
          <svg width="22" height="22" viewBox="0 0 22 22" fill="#666"><path d="M1 0h20l1 1v20l-1 1h-2v-2h-2v2h-5v-2h-2v2H5v-2H3v2H1l-1-1V1z" /></svg>
        </button>
        <button type="button" aria-label="上一个">
          <svg width="8" height="14" viewBox="0 0 8 14" fill="#666"><path d="M8 0v14L0 7z" /></svg>
        </button>
        <button type="button" aria-label="下一个">
          <svg width="8" height="14" viewBox="0 0 8 14" fill="#bfbfbf"><path d="M0 0v14l8-7z" /></svg>
        </button>
        <button type="button" aria-label="演示">
          <svg width="26" height="24" viewBox="0 0 26 24" fill="none" stroke="#666" stroke-width="2"><path d="M13 0v3M3 5v11h20V5M13 16v6M9 23h8" /><path d="M0 4h26" stroke-width="4" /></svg>
        </button>
      </div>
      <span class="mark">https://blog.csdn.net/weixin_43074152</span>
    </footer>
  </div>
</template>

<style>
body {
  background: #fff;
}
</style>

<style scoped>
.page {
  min-height: 100vh;
  display: flex;
  flex-direction: column;
  font-family: 'Noto Sans CJK SC', 'Noto Sans', sans-serif;
  font-size: 24px;
  line-height: 36px;
  color: #333;
}
.page * {
  box-sizing: border-box;
}
button {
  padding: 0;
  border: 0;
  background: none;
  font: inherit;
  display: flex;
  align-items: center;
  justify-content: center;
}
.dash {
  flex: 1;
  width: 100%;
  max-width: 1952px;
  margin: 0 auto;
  padding-top: 92px;
  display: grid;
  grid-template-columns: minmax(0, 1fr) 304px;
  gap: 16px;
  align-items: start;
}
.title {
  margin: 0;
  padding: 8px 8px 22px;
  font-size: 40px;
  line-height: 60px;
  font-weight: 400;
}
.title.lower {
  padding: 22px 8px 17px;
}
.map {
  position: relative;
  border: solid #e5e5e5;
  border-width: 1px 2px 2px 1px;
}
.canvas {
  display: block;
  width: 100%;
  height: auto;
}
.shore {
  stroke: #f5f5f5;
  stroke-width: 2px;
  vector-effect: non-scaling-stroke;
}
.sea {
  fill: #fff;
}
.border,
.region {
  fill: none;
  stroke: #a0a0a0;
  stroke-width: 1px;
  stroke-linejoin: round;
  vector-effect: non-scaling-stroke;
}
.region {
  stroke: #b8b8b8;
}
.place {
  font-size: 16px;
  fill: #808080;
  text-anchor: middle;
  stroke: #f3f3f3;
  stroke-width: 3px;
  stroke-linejoin: round;
  paint-order: stroke;
}
.place.big {
  font-size: 18px;
}
.city {
  font-size: 24px;
  fill: #000;
  text-anchor: middle;
}
.tools {
  position: absolute;
  left: 19px;
  top: 19px;
  width: 56px;
  display: flex;
  flex-direction: column;
  gap: 18px;
}
.search,
.group {
  border: 2px solid #b3b3b3;
  background: #f6f6f6;
}
.search {
  height: 56px;
}
.group {
  height: 220px;
  display: flex;
  flex-direction: column;
  align-items: center;
}
.step {
  width: 52px;
  height: 52px;
}
.pin {
  width: 44px;
  height: 44px;
  flex: none;
  border: 2px solid #b3b3b3;
  background: #e5e5e5;
}
.rule {
  width: 40px;
  height: 2px;
  margin-top: 9px;
  background: #e0e0e0;
}
.more {
  flex: 1;
  width: 52px;
  padding-top: 2px;
}
.credit {
  position: absolute;
  left: 0;
  bottom: 5px;
  padding: 0 8px 0 10px;
  font-family: 'Liberation Sans', Arial, sans-serif;
  font-size: 16px;
  line-height: 22px;
  color: #757575;
  background: rgba(255, 255, 255, 0.6);
}
.chart {
  position: relative;
}
.tick {
  font-size: 25px;
  font-weight: 300;
  fill: #666;
}
.axis {
  font-size: 24px;
  fill: #333;
}
.nulls {
  position: absolute;
  right: 10px;
  bottom: 114px;
  width: 120px;
  height: 32px;
  padding-bottom: 2px;
  border-radius: 6px;
  background: linear-gradient(110deg, #c0c0c0, #a4a4a4);
  color: #fff;
  font-size: 20px;
  line-height: 30px;
  font-weight: 700;
}
.head {
  display: block;
  margin: 0;
  padding: 0;
  font-size: 24px;
  line-height: 36px;
  font-weight: 400;
}
.pick {
  position: relative;
  width: 292px;
  margin: 10px 6px 20px;
}
.pick select {
  appearance: none;
  display: block;
  width: 100%;
  height: 40px;
  padding: 0 40px 2px 6px;
  border: 2px solid #666;
  border-radius: 4px;
  background: #fff;
  color: #333;
  font: inherit;
  font-size: 22px;
  line-height: 34px;
}
.pick::before {
  content: '';
  position: absolute;
  right: 36px;
  top: 2px;
  bottom: 2px;
  width: 2px;
  background: #e5e5e5;
}
.pick::after {
  content: '';
  position: absolute;
  right: 12px;
  top: 16px;
  border: solid transparent;
  border-width: 8px 7px 0;
  border-top-color: #333;
}
fieldset {
  margin: 0;
  padding: 0;
  border: 0;
  min-width: 0;
}
fieldset .head {
  padding-bottom: 9px;
}
.opt {
  display: flex;
  align-items: center;
  gap: 11px;
  height: 38px;
  padding-left: 12px;
}
.opt span {
  font-weight: 300;
}
.opt.hot {
  background: #d6d6d6;
}
.opt input {
  appearance: none;
  position: relative;
  width: 30px;
  height: 30px;
  margin: 0;
  border: 2px solid #ccc;
  border-radius: 2px;
  background: #fff;
}
.opt input:checked {
  border-color: #666;
}
.opt input:checked::before {
  content: '';
  position: absolute;
  left: 5px;
  top: 5px;
  width: 16px;
  height: 16px;
  background: #666;
  clip-path: polygon(0 60%, 18% 46%, 42% 68%, 80% 0, 100% 12%, 48% 100%);
}
.students {
  margin-top: 31px;
}
.sizes {
  list-style: none;
  margin: 4px 0 0;
  padding: 0 0 0 6px;
}
.sizes li {
  display: flex;
  align-items: center;
  height: 40px;
  font-size: 25px;
  font-weight: 300;
}
.sizes span {
  width: 73px;
  text-align: right;
  padding-top: 2px;
}
.colours {
  margin-top: 14px;
}
.key {
  display: flex;
  align-items: center;
  gap: 10px;
  height: 40px;
  margin: 4px 0 0;
  padding-left: 6px;
  font-size: 25px;
  font-weight: 300;
}
.key i {
  width: 28px;
  height: 28px;
  background: #f28e2b;
}
.bar {
  position: relative;
  height: 60px;
  display: flex;
  justify-content: space-between;
  background: #efefef;
}
.sheets {
  display: flex;
}
.sheets a {
  display: flex;
  align-items: center;
  gap: 10px;
  padding: 0 12px;
  border-right: 2px solid #dedede;
  color: #000;
  text-decoration: none;
  white-space: nowrap;
}
.sheets a.board {
  padding: 0 15px 0 16px;
}
.sheets a.active {
  background: #fff;
}
.views-nav {
  display: grid;
  grid-template-columns: 22px 22px 20px 16px 26px;
  column-gap: 22px;
  align-items: center;
  padding: 12px 9px 0 0;
}
.mark {
  position: absolute;
  right: 8px;
  bottom: 8px;
  font-family: 'Liberation Sans', Arial, sans-serif;
  font-size: 16px;
  line-height: 22px;
  color: rgba(255, 255, 255, 0.8);
  text-shadow: 1px 1px 1px rgba(0, 0, 0, 0.2);
}
</style>
